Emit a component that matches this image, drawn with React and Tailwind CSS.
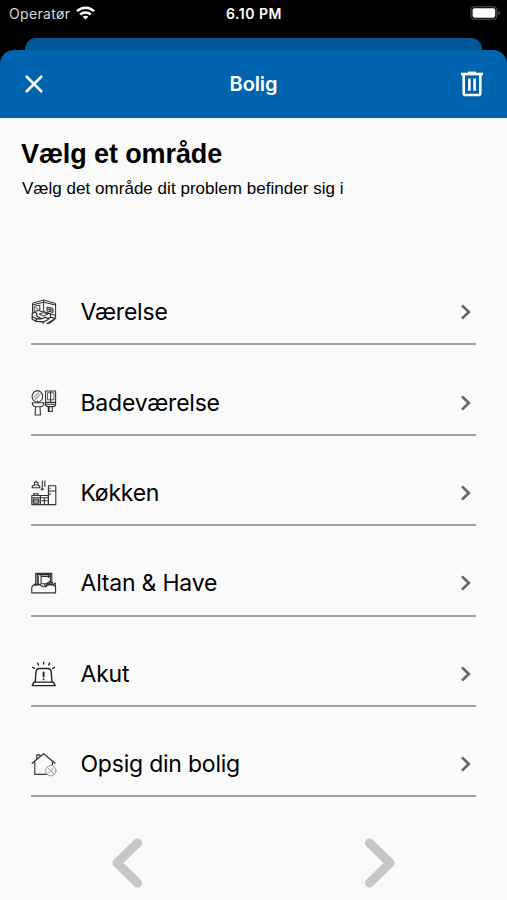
import React from 'react';

function RoomIcon() {
  return (
    <svg width="26" height="26" viewBox="0 0 26 26" fill="none" stroke="#2b2b2b" strokeWidth="1" strokeLinejoin="round">
      <path d="M1.5 14V4.2L12.6 1l12 3.400V19.500" />
      <path d="M12.6 1v11.500l12 4M2 5.800l10.600-2.600 12 2.800" />
      <path d="M3.200 7.200l5.600-1v5.200l-5.600 1ZM4.600 8.600l2.800 2M8.600 12l3.800 1" />
      <path d="M16 8l6 1.400v4L16 12ZM16 9.800l6 1.600M19 8.800v4" />
      <path d="M1.200 14.500l2.600-1.200 2 1v3l5 2.400 3.400-1.400 3.600 1.600-5 3-8-.600-3.600-2ZM1.200 17.500l4 2.200v2.600M5.200 19.700l5.600.300" strokeWidth="1.200" />
      <path d="M8 15l4.500-1.400L17 15l-4.400 2Z" />
      <path d="M16.500 14.200l3 .6v3.400l5 1.300-8.800 5.300M19.500 18.200l-2.500 1.300M12 22v2.800M17.500 24.800l6-4.200" strokeWidth="1.200" />
    </svg>
  );
}

function BathroomIcon() {
  return (
    <svg width="26" height="26" viewBox="0 0 26 26" fill="none" stroke="#333" strokeWidth="1.1" strokeLinejoin="round">
      <ellipse cx="6.4" cy="6.4" rx="5.3" ry="5.8" />
      <path d="M2.8 7.5 8 2.6M3.5 10l6-5.8" strokeWidth="0.8" />
      <path d="M1.2 12.8h11.6c-.2 2.2-1.8 4-4 4H5.2c-2.2 0-3.8-1.8-4-4ZM4.6 16.8 4.1 25h5.4L9 16.8M6.8 10.8v2" />
      <path d="M14.6 1h10v11.4h-10ZM19.6 1v11" />
      <path d="M16.4 2.8h6.5v7h-6.5Z" strokeWidth="0.8" />
      <path d="M14 14.2h10.8c-.3 1.6-1.4 2.4-3 2.4h-4.6c-1.8 0-2.8-.8-3.2-2.4ZM17.3 16.6v4.9h4v-4.9M18.2 16.6v4.9M14.6 12.4v1.8M24.6 12.4v1.8" />
    </svg>
  );
}

function KitchenIcon() {
  return (
    <svg width="26" height="26" viewBox="0 0 26 26" fill="none" stroke="#333" strokeWidth="1.1" strokeLinejoin="round">
      <path d="M1.2 7.8h7.6V6.3L7 5V2.2H3.4V5L1.2 6.3ZM5 2.2V.5M3.4 5H7" />
      <path d="M11.3.5v8M13.8.5v5.2M11.3 8.5v1.6M12.9 6h1.8M10.2 8.5h2.2M9.6 9.8h3.2" />
      <path d="M17.4 5.8h7.4v18.8h-7.4ZM17.4 11h7.4M19 7.8v1.5M19 12.8v2.5" />
      <path d="M.8 15.5h16.6v9.1H.8ZM9.4 15.5v9.1M.8 17.8h16.6M13.4 17.8v6.8M2.3 19.2h5.5v3.9H2.3ZM2.3 21h5.5M10.4 20.7h6.2M2 13.8h5.6M3 15.5v-1.7M6.6 15.5v-1.7" />
    </svg>
  );
}

function BalconyIcon() {
  return (
    <svg width="26" height="26" viewBox="0 0 26 26" fill="none" stroke="#333" strokeWidth="1.1" strokeLinejoin="round">
      <path d="M4.7 15.8V3.2h16.1v10.4M6.2 14.8V4.7h13.2v8.4M4.7 3.9h16.1" />
      <path d="M10.1 4.7v9.4M7.3 5.5v8.5M10.1 6.4h9.3M17.5 5v3" />
      <path d="M10.6 13.8h8M13 14l1.6 2.2 1.7-2.2M15.4 13.8l3.6-2.6M18.2 14l2-2.4M20 14.2l2.2-2.4" />
      <path d="M.8 16.8 2.7 15h6.6l2.5 1.8h2.8L17 15h5.4l2.2 1.8v6.1H.8ZM2.5 14.2H10M16.3 14.2h6.3l1.8-1.2v3" />
    </svg>
  );
}

function AlarmIcon() {
  return (
    <svg width="26" height="26" viewBox="0 0 26 26" fill="none" stroke="#222" strokeWidth="1.4" strokeLinecap="round" strokeLinejoin="round">
      <path d="M4.2 21 5 10.8c.2-2.1 1.5-3.3 3.6-3.3h8c2.1 0 3.4 1.2 3.6 3.3L21 21" />
      <path d="M3 21.1h19.2l2 3.5H1.2Z" />
      <path d="M12.6 11.4v4" strokeWidth="1.9" />
      <path d="M12.6 18.2v.1" strokeWidth="1.9" />
      <path d="M12.6 1.2v1.800M6.600 2.2l.9 1.7M18.600 2.2l-.9 1.7M1.800 6.300l1.600 1M23.400 6.300l-1.600 1" />
    </svg>
  );
}

function HouseIcon() {
  return (
    <svg width="26" height="26" viewBox="0 0 26 26" fill="none" stroke="#333" strokeWidth="1.15" strokeLinecap="round" strokeLinejoin="round">
      <path d="M1.2 12.3 12.6 2.8l11.4 9.5M3.8 10.5v12.8h11.4M21.5 10.5v3.3M5.8 8V3.8h3v2" />
      <g stroke="#888" strokeWidth="0.9">
        <circle cx="19.8" cy="19.7" r="5.2" />
        <path d="m17 16.9 5.6 5.6M22.6 16.9 17 22.5" />
      </g>
    </svg>
  );
}

function TrashIcon() {
  return (
    <svg width="22" height="26" viewBox="0 0 22 26" fill="none" stroke="#fff" strokeWidth="2.6">
      <path d="M0 3h22" />
      <path d="M7 1.6h8" strokeWidth="2" />
      <path d="M2.7 3v19.2c0 1.2.6 1.8 1.8 1.8h13c1.2 0 1.8-.6 1.8-1.8V3" />
      <path d="M8.4 7.6v12.2M13.6 7.6v12.2" />
    </svg>
  );
}

const areas = [
  { label: 'Værelse', icon: RoomIcon },
  { label: 'Badeværelse', icon: BathroomIcon },
  { label: 'Køkken', icon: KitchenIcon },
  { label: 'Altan & Have', icon: BalconyIcon },
  { label: 'Akut', icon: AlarmIcon },
  { label: 'Opsig din bolig', icon: HouseIcon },
];

function StatusBar() {
  return (
    <div className="grid h-[38px] grid-cols-3 items-start pt-1 text-white">
      <div className="flex h-[19px] items-center gap-[6px] pl-[9px]">
        <span className="text-[14px] tracking-[0.33px] text-[#d8d8d8]">Operatør</span>
        <svg width="19" height="14" viewBox="0 0 19 14" fill="none" stroke="#fff" strokeWidth="2.5" className="-mt-px">
          <path d="M1 5.2C5.8.6 13.2.6 18 5.2" />
          <path d="M4.2 8.5c3-2.8 7.6-2.8 10.6 0" />
          <path d="M9.5 13.6 6.6 10.8c1.6-1.4 4.2-1.4 5.8 0Z" fill="#fff" stroke="none" />
        </svg>
      </div>
      <div className="flex h-[19px] items-center justify-center pl-px text-[14px] font-semibold tracking-[0.5px]">6.10 PM</div>
      <div className="flex h-[18px] items-center justify-end pr-[6px]">
        <svg width="31" height="14" viewBox="0 0 31 14">
          <rect x="0.9" y="0.7" width="26" height="12.6" rx="3.6" fill="none" stroke="#555" strokeWidth="1.1" />
          <rect x="2.6" y="2.3" width="22.6" height="9.4" rx="2" fill="#fff" />
          <path d="M28.4 4.8c2 .8 2 3.6 0 4.4Z" fill="#555" />
        </svg>
      </div>
    </div>
  );
}

export default function App() {
  return (
    <div className="flex h-[900px] w-[507px] flex-col overflow-hidden bg-black font-['Inter',sans-serif]">
      <StatusBar />
      <div className="mx-[25px] h-3 rounded-t-[11px] bg-[#025894]" />
      <header className="grid h-[68px] grid-cols-3 items-center rounded-t-[14px] bg-[#0063ae] px-6 text-white">
        <svg width="20" height="20" viewBox="0 0 20 20" stroke="#fff" strokeWidth="2.5">
          <path d="m2 2 16 16M18 2 2 18" />
        </svg>
        <h1 className="text-center text-[20px] font-semibold tracking-[-0.1px]">Bolig</h1>
        <div className="flex justify-end">
          <TrashIcon />
        </div>
      </header>

      <main className="flex flex-1 flex-col bg-[#fafafa] text-black">
        <div className="h-[137px] pl-[21px] pt-[18px] font-['Liberation_Sans',sans-serif]">
          <h2 className="text-[27px] font-bold leading-[36px] tracking-[-0.1px]">Vælg et område</h2>
          <p className="ml-px mt-[7px] text-[17px] leading-5 tracking-[0.03px]">Vælg det område dit problem befinder sig i</p>
        </div>

        <ul className="mx-[31px]">
          {areas.map(({ label, icon: Icon }) => (
            <li key={label} className="flex h-[90.4px] items-center border-b-2 border-[#a0a0a0] pt-[26px]">
              <Icon />
              <span className="ml-[23.5px] flex-1 text-[23px] leading-8 tracking-[-0.22px]">{label}</span>
              <svg width="11" height="16" viewBox="0 0 11 16" fill="none" stroke="#666" strokeWidth="2.7" className="mr-[5px]">
                <path d="m2 1.4 6.8 6.6L2 14.6" />
              </svg>
            </li>
          ))}
        </ul>

        <div className="flex justify-around pt-[40px]">
          <svg width="34" height="52" viewBox="0 0 34 52" fill="none" stroke="#c6c6c6" strokeWidth="9" strokeLinecap="round" strokeLinejoin="round">
            <path d="M27.5 6 7 26l20.5 20" />
          </svg>
          <svg width="34" height="52" viewBox="0 0 34 52" fill="none" stroke="#c6c6c6" strokeWidth="9" strokeLinecap="round" strokeLinejoin="round">
            <path d="m6.5 6 20.5 20L6.5 46" />
          </svg>
        </div>
      </main>
    </div>
  );
}
